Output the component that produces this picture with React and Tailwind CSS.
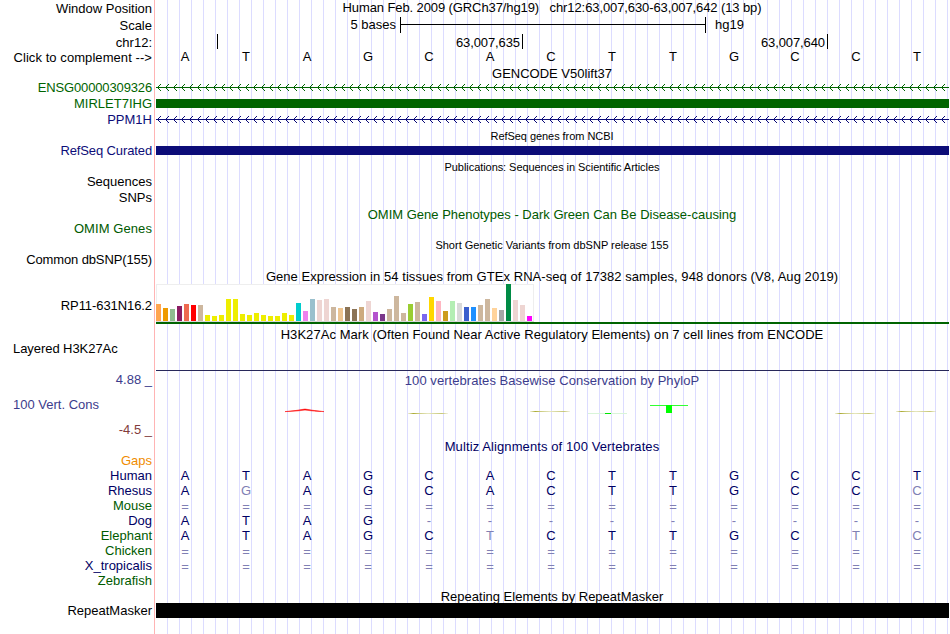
import clsx from "clsx";

const TRACK_WIDTH = 793;

const GTEX_BARS = [
  [17, "#ffa54f"], [13, "#ee9a00"], [12, "#8fbc8f"], [15, "#8b1c62"],
  [17, "#ee6a50"], [16, "#ff0000"], [16, "#cdb79e"], [6, "#eeee00"],
  [5, "#eeee00"], [6, "#eeee00"], [22, "#eeee00"], [22, "#eeee00"],
  [7, "#eeee00"], [6, "#eeee00"], [8, "#eeee00"], [6, "#eeee00"],
  [5, "#eeee00"], [5, "#eeee00"], [8, "#eeee00"], [6, "#eeee00"],
  [18, "#00cdcd"], [10, "#ee82ee"], [22, "#9ac0cd"], [21, "#eed5d2"],
  [22, "#eed5d2"], [14, "#cdb79e"], [13, "#eec591"], [14, "#8b7355"],
  [12, "#8b7355"], [14, "#cdaa7d"], [20, "#eed5d2"], [9, "#b452cd"],
  [7, "#7a378b"], [12, "#cdb79e"], [25, "#cdb79e"], [8, "#cdb79e"],
  [17, "#9acd32"], [19, "#cdb79e"], [7, "#7a67ee"], [24, "#ffd700"],
  [20, "#ffb6c1"], [10, "#cd9b1d"], [20, "#b4eeb4"], [18, "#d9d9d9"],
  [14, "#3a5fcd"], [14, "#1e90ff"], [16, "#cdb79e"], [22, "#cdb79e"],
  [13, "#ffd39b"], [11, "#a6a6a6"], [37, "#008b45"], [21, "#eed5d2"],
  [16, "#eed5d2"], [5, "#ff00ff"],
];

const REFERENCE = "ATAGCACTTGCCT";

// Lowercase letters are mismatches against the reference
const SPECIES = [
  { name: "Gaps", color: "text-[#f08c00]", bases: "" },
  { name: "Human", color: "text-[#000064]", bases: "ATAGCACTTGCCT" },
  { name: "Rhesus", color: "text-[#000064]", bases: "AgAGCACTTGCCc" },
  { name: "Mouse", color: "text-[#005a00]", bases: "=============" },
  { name: "Dog", color: "text-[#000064]", bases: "ATAG---------" },
  { name: "Elephant", color: "text-[#005a00]", bases: "ATAGCtCTTGCtc" },
  { name: "Chicken", color: "text-[#005a00]", bases: "=============" },
  { name: "X_tropicalis", color: "text-[#000064]", bases: "=============" },
  { name: "Zebrafish", color: "text-[#005a00]", bases: "" },
];

function Row({ label, height, labelClass = "text-black", children }) {
  return (
    <div className={clsx("flex shrink-0", height)}>
      <div className={clsx("w-[152px] shrink-0 text-right whitespace-pre", labelClass)}>
        {label}
      </div>
      <div className="ml-1 w-[793px] shrink-0">{children}</div>
    </div>
  );
}

function TitleRow({ height, className = "text-black", children }) {
  return (
    <Row height={height}>
      <div className={clsx("pr-px text-center whitespace-pre", className)}>{children}</div>
    </Row>
  );
}

function Bases({ sequence, className }) {
  return (
    <div className={clsx("grid grid-cols-13 text-center", className)}>
      {sequence.split("").map((base, i) => (
        <span
          key={i}
          className={clsx(
            "pr-[3px]",
            /[a-z=-]/.test(base) && "text-[#8080b4]",
            base === "=" && "pt-px"
          )}
        >
          {base.toUpperCase()}
        </span>
      ))}
    </div>
  );
}

function IntronArrows({ color }) {
  const tips = Array.from({ length: 99 }, (_, i) => 1 + i * 8);
  return (
    <svg width={TRACK_WIDTH} height="15" className="block" shapeRendering="crispEdges">
      <rect x="0" y="7" width={TRACK_WIDTH} height="1" fill={color} />
      {tips.map((x) => (
        <g key={x} fill={color}>
          <rect x={x + 1} y="6" width="1" height="3" />
          <rect x={x + 2} y="5" width="1" height="1" />
          <rect x={x + 2} y="9" width="1" height="1" />
          <rect x={x + 3} y="4" width="1" height="1" />
          <rect x={x + 3} y="10" width="1" height="1" />
        </g>
      ))}
    </svg>
  );
}

function ExpressionChart() {
  return (
    <svg width={TRACK_WIDTH} height="40" className="block" shapeRendering="crispEdges">
      <rect x="0" y="0" width="378" height="38" fill="#eeeeee" />
      <rect x="1" y="1" width="376" height="36" fill="#ffffff" />
      {GTEX_BARS.map(([h, fill], i) => (
        <rect key={i} x={i * 7} y={37 - h} width="5" height={h} fill={fill} />
      ))}
      <rect x="0" y="37" width="378" height="1" fill="#d8d8d8" />
      <rect x="0" y="38" width={TRACK_WIDTH} height="2" fill="#006400" />
    </svg>
  );
}

function ConservationWiggle() {
  return (
    <svg width={TRACK_WIDTH} height="40" className="block">
      <defs>
        <linearGradient id="fade">
          <stop offset="0" stopColor="#c8c878" stopOpacity="0.3" />
          <stop offset="0.13" stopColor="#aaaa32" />
          <stop offset="0.25" stopColor="#c8c878" />
          <stop offset="0.5" stopColor="#e6e6be" />
          <stop offset="0.85" stopColor="#c8c878" />
          <stop offset="1" stopColor="#c8c878" stopOpacity="0.2" />
        </linearGradient>
      </defs>
      <path
        d="M129 23.6 Q139 22.9 149 21 Q159 22.9 168 23.6 Q159 23.5 149 22.1 Q139 23.5 129 23.6Z"
        fill="#ff0000"
        stroke="#ff0000"
        strokeWidth="0.5"
      />
      <g shapeRendering="crispEdges">
        <rect x="252" y="25" width="40" height="1" fill="url(#fade)" />
        <rect x="374" y="23" width="40" height="1" fill="url(#fade)" />
        <rect x="432" y="25" width="39" height="1" fill="#d9f5d9" />
        <rect x="449" y="25" width="6" height="1" fill="#00e600" />
        <rect x="494" y="17" width="38" height="1" fill="#32ff32" />
        <rect x="510" y="17" width="6" height="8" fill="#00ff00" />
        <rect x="679" y="25" width="40" height="1" fill="url(#fade)" />
        <rect x="740" y="23" width="40" height="1" fill="url(#fade)" />
      </g>
    </svg>
  );
}

export default function App() {
  return (
    <div className="h-[634px] w-[950px] overflow-hidden bg-white">
      <div className="flex h-full w-full flex-col bg-[linear-gradient(#ffb4b4,#ffb4b4),repeating-linear-gradient(to_right,transparent_0px,transparent_11px,#dcdcff_11px,#dcdcff_12px)] bg-[size:1px_100%,793px_100%] bg-[position:154px_0,156px_0] bg-no-repeat pt-px font-['Liberation_Sans',Arial,sans-serif] text-[13px] leading-[15px] text-black">
        {/* Position and ruler */}
        <Row label="Window Position" height="h-[17px]">
          <div className="-mt-px pr-px text-center tracking-[-0.1px] whitespace-pre">
            {"Human Feb. 2009 (GRCh37/hg19)   chr12:63,007,630-63,007,642 (13 bp)"}
          </div>
        </Row>
        <Row label="Scale" height="h-[17px]">
          <div className="-mt-px flex">
            <span className="w-[244px] pr-1 text-right">5 bases</span>
            <div className="h-4 w-[306px] border-x border-black pt-[7px]">
              <div className="h-px bg-black" />
            </div>
            <span className="pl-[9px]">hg19</span>
          </div>
        </Row>
        <Row label="chr12:" height="h-[15px]">
          <div className="-mt-px flex h-[15px] text-right leading-[17px] tracking-[-0.1px]">
            <div className="w-[62px] border-r border-black" />
            <div className="w-[305px] border-r border-black pr-0.5">63,007,635</div>
            <div className="w-[305px] border-r border-black pr-0.5">63,007,640</div>
          </div>
        </Row>
        <Row label="Click to complement -->" height="h-4" labelClass="tracking-[0.07px]">
          <Bases sequence={REFERENCE} className="-mt-px" />
        </Row>

        {/* Genes */}
        <TitleRow height="h-[14px]">GENCODE V50lift37</TitleRow>
        <Row
          label="ENSG00000309326"
          height="h-4"
          labelClass="text-[#006400] tracking-[-0.14px]"
        >
          <IntronArrows color="#006400" />
        </Row>
        <Row label="MIRLET7IHG" height="h-4" labelClass="text-[#006400]">
          <div className="mt-[3px] h-[9px] bg-[#006400]" />
        </Row>
        <Row label="PPM1H" height="h-[15px]" labelClass="text-[#0c0c78]">
          <IntronArrows color="#0c0c78" />
        </Row>
        <TitleRow height="h-4" className="pt-0.5 text-[11px] tracking-[-0.05px]">
          RefSeq genes from NCBI
        </TitleRow>
        <Row
          label="RefSeq Curated"
          height="h-[15px]"
          labelClass="text-[#0c0c78] tracking-[-0.12px]"
        >
          <div className="mt-[3px] h-[9px] bg-[#0c0c78]" />
        </Row>

        {/* Publications and variants */}
        <TitleRow height="h-4" className="pt-0.5 text-[11px] tracking-[-0.06px]">
          Publications: Sequences in Scientific Articles
        </TitleRow>
        <Row label="Sequences" height="h-4" />
        <Row label="SNPs" height="h-[17px]" />
        <TitleRow height="h-[14px]" className="text-[#005a00]">
          OMIM Gene Phenotypes - Dark Green Can Be Disease-causing
        </TitleRow>
        <Row
          label="OMIM Genes"
          height="h-[15px]"
          labelClass="text-[#005a00] tracking-[0.08px]"
        />
        <TitleRow height="h-4" className="pt-0.5 text-[11px]">
          Short Genetic Variants from dbSNP release 155
        </TitleRow>
        <Row label="Common dbSNP(155)" height="h-[17px]" labelClass="tracking-[-0.12px]" />

        {/* GTEx */}
        <TitleRow height="h-[15px]" className="tracking-[0.055px]">
          Gene Expression in 54 tissues from GTEx RNA-seq of 17382 samples, 948 donors (V8, Aug 2019)
        </TitleRow>
        <Row
          label="RP11-631N16.2"
          height="h-[43px]"
          labelClass="pt-[14px] tracking-[-0.08px]"
        >
          <ExpressionChart />
        </Row>

        {/* Regulation */}
        <TitleRow height="h-[14px]" className="tracking-[0.06px]">
          H3K27Ac Mark (Often Found Near Active Regulatory Elements) on 7 cell lines from ENCODE
        </TitleRow>
        <Row
          label="Layered H3K27Ac"
          height="h-[30px]"
          labelClass="pl-[13px] !text-left tracking-[-0.06px]"
        >
          <div className="mt-[29px] h-px bg-[#28285a]" />
        </Row>

        {/* Conservation */}
        <div className="flex h-[68px] shrink-0">
          <div className="flex w-[152px] flex-col gap-[10px] pt-px text-right text-[#3c3c8c]">
            <span>4.88 _</span>
            <span className="pl-[13px] text-left">100 Vert. Cons</span>
            <span className="text-[#823c3c]">-4.5 _</span>
          </div>
          <div className="ml-1 w-[793px]">
            <div className="pt-0.5 pr-px text-center tracking-[0.05px] text-[#3c3c8c]">
              100 vertebrates Basewise Conservation by PhyloP
            </div>
            <ConservationWiggle />
          </div>
        </div>
        <TitleRow height="h-[14px]" className="text-[#000064] tracking-[0.1px]">
          Multiz Alignments of 100 Vertebrates
        </TitleRow>
        {SPECIES.map(({ name, color, bases }) => (
          <Row key={name} label={name} height="h-[15px]" labelClass={color}>
            <Bases sequence={bases} className="text-[#000064]" />
          </Row>
        ))}

        {/* Repeats */}
        <TitleRow height="h-[15px]" className="pt-px">
          Repeating Elements by RepeatMasker
        </TitleRow>
        <Row label="RepeatMasker" height="h-[15px]">
          <div className="h-[15px] bg-black" />
        </Row>
      </div>
    </div>
  );
}
